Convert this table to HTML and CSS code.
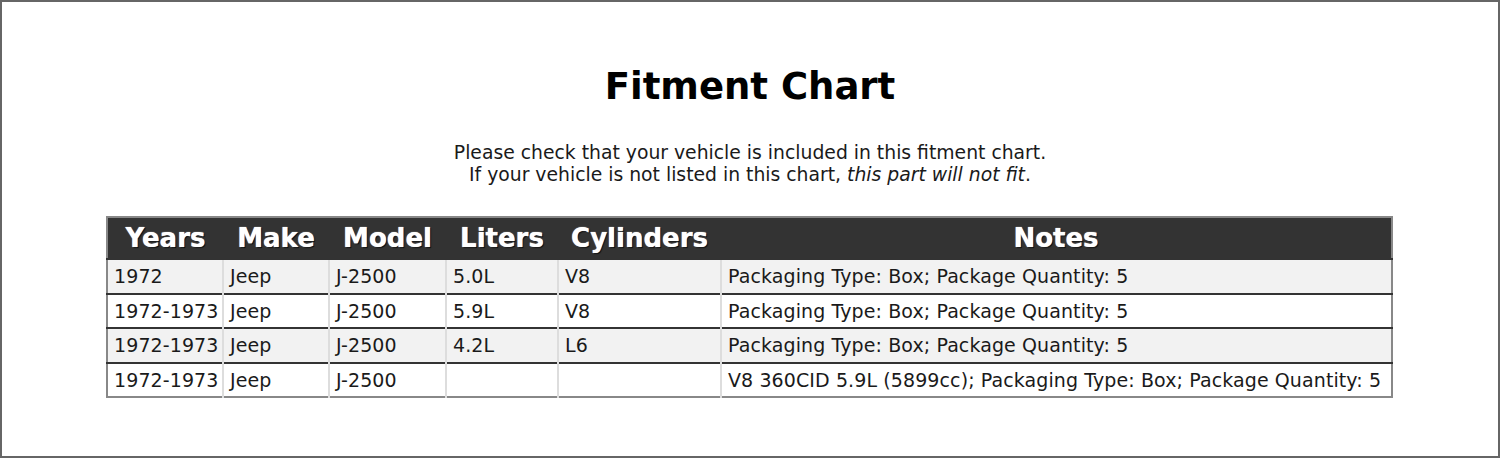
FILE: index.html
```html
<!DOCTYPE html>
<html>
<head>
<meta charset="utf-8">
<link rel="stylesheet" href="styles.css">
</head>
<body>
<div class="frame">
  <h1 class="title">Fitment Chart</h1>
  <p class="intro">Please check that your vehicle is included in this fitment chart.<br>If your vehicle is not listed in this chart, <em>this part will not fit</em>.</p>
  <table class="chart">
    <colgroup>
      <col class="c-years"><col class="c-make"><col class="c-model"><col class="c-liters"><col class="c-cyl"><col class="c-notes">
    </colgroup>
    <thead>
      <tr><th>Years</th><th>Make</th><th>Model</th><th>Liters</th><th>Cylinders</th><th>Notes</th></tr>
    </thead>
    <tbody>
      <tr class="alt"><td>1972</td><td>Jeep</td><td>J-2500</td><td>5.0L</td><td>V8</td><td>Packaging Type: Box; Package Quantity: 5</td></tr>
      <tr><td>1972-1973</td><td>Jeep</td><td>J-2500</td><td>5.9L</td><td>V8</td><td>Packaging Type: Box; Package Quantity: 5</td></tr>
      <tr class="alt"><td>1972-1973</td><td>Jeep</td><td>J-2500</td><td>4.2L</td><td>L6</td><td>Packaging Type: Box; Package Quantity: 5</td></tr>
      <tr><td>1972-1973</td><td>Jeep</td><td>J-2500</td><td></td><td></td><td>V8 360CID 5.9L (5899cc); Packaging Type: Box; Package Quantity: 5</td></tr>
    </tbody>
  </table>
</div>
</body>
</html>
```
FILE: styles.css
```css
html, body {
  margin: 0;
  padding: 0;
  background: #fff;
}
body {
  font-family: "DejaVu Sans", Verdana, sans-serif;
  color: #111;
}
.frame {
  box-sizing: border-box;
  width: 1500px;
  height: 458px;
  border: 2px solid #666;
  padding-top: 63px;
}
.title {
  margin: 0;
  text-align: center;
  font-size: 37px;
  font-weight: bold;
  line-height: 44px;
  color: #000;
}
.intro {
  margin: 33px 0 0;
  text-align: center;
  font-size: 18.8px;
  line-height: 22px;
  color: #1a1a1a;
}
.chart {
  margin: 30px 0 0 104px;
  width: 1287px;
  border-collapse: collapse;
  border: 2px solid #888;
  table-layout: fixed;
}
.c-years { width: 116px; }
.c-make { width: 106px; }
.c-model { width: 117px; }
.c-liters { width: 112px; }
.c-cyl { width: 163px; }
.chart th {
  background: #333;
  color: #fff;
  font-size: 26px;
  font-weight: bold;
  height: 40px;
  padding: 0;
  text-align: center;
  text-shadow: 0 0 1px #fff, 1px 1px 1px #000;
}
.chart td {
  font-size: 19px;
  letter-spacing: 0.1px;
  height: 32.5px;
  padding: 0 6px;
  text-align: left;
  border-left: 2px solid #ddd;
  border-top: 2px solid #333;
  color: #1a1a1a;
  white-space: nowrap;
}
.chart td:first-child { border-left: none; }
.chart tr.alt td { background: #f2f2f2; }
```
